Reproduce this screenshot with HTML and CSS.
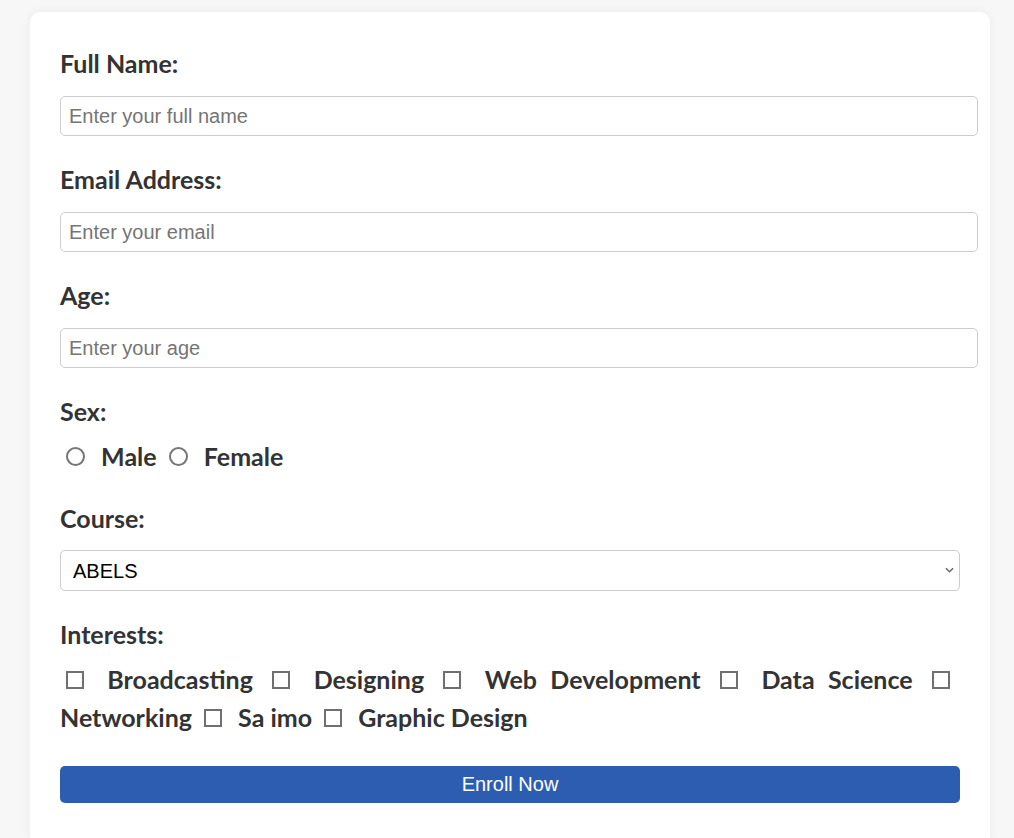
FILE: index.html
```html
<!DOCTYPE html>
<html lang="en">
<head>
<meta charset="utf-8">
<title>Enrollment Form</title>
<link rel="stylesheet" href="styles.css">
</head>
<body>
<div class="page">
  <form class="card">
    <label class="field-label" for="name">Full Name:</label>
    <input class="text-input" id="name" type="text" placeholder="Enter your full name">

    <label class="field-label" for="email">Email Address:</label>
    <input class="text-input" id="email" type="email" placeholder="Enter your email">

    <label class="field-label" for="age">Age:</label>
    <input class="text-input" id="age" type="text" placeholder="Enter your age">

    <label class="field-label group-label">Sex:</label>
    <div class="options radios">
      <input class="opt radio" type="radio" name="sex" id="male"> <label for="male">Male</label>
      <input class="opt radio" type="radio" name="sex" id="female"> <label for="female">Female</label>
    </div>

    <label class="field-label" for="course">Course:</label>
    <div class="select-wrap">
      <select class="select-input" id="course">
        <option>ABELS</option>
      </select>
      <svg class="chevron" width="10" height="6" viewBox="0 0 10 6" aria-hidden="true">
        <path d="M1 1 L5 5 L9 1" fill="none" stroke="#666" stroke-width="1.6"/>
      </svg>
    </div>

    <label class="field-label group-label">Interests:</label>
    <div class="options checks">
      <input class="opt check" type="checkbox" id="i1"> <label for="i1">Broadcasting</label>
      <input class="opt check" type="checkbox" id="i2"> <label for="i2">Designing</label>
      <input class="opt check" type="checkbox" id="i3"> <label for="i3">Web Development</label>
      <input class="opt check" type="checkbox" id="i4"> <label for="i4">Data Science</label>
      <input class="opt check" type="checkbox" id="i5"> <label for="i5">Networking</label>
      <input class="opt check" type="checkbox" id="i6"> <label for="i6">Sa imo</label>
      <input class="opt check" type="checkbox" id="i7"> <label for="i7">Graphic Design</label>
    </div>

    <button class="submit" type="button">Enroll Now</button>
  </form>
</div>
</body>
</html>
```

FILE: styles.css
```css
html, body {
  margin: 0;
  padding: 0;
  background: #f7f7f7;
}

.page {
  padding: 12px 0 0 30px;
}

.card {
  box-sizing: border-box;
  width: 960px;
  height: 826px;
  padding: 30px 30px 0 30px;
  background: #ffffff;
  border-radius: 10px 10px 0 0;
  box-shadow: 0 0 10px rgba(0, 0, 0, 0.06);
  font-family: "Lato", "Noto Sans", sans-serif;
  color: #333333;
}

.field-label {
  display: block;
  font-size: 25px;
  font-weight: 700;
  line-height: 30px;
  margin: 6px 0 18px;
}

.group-label {
  margin-bottom: 11px;
}

.text-input {
  display: block;
  width: 100%;
  box-sizing: content-box;
  height: 22px;
  padding: 8px;
  border: 1px solid #cccccc;
  border-radius: 5px;
  font-family: "Liberation Sans", Arial, sans-serif;
  font-size: 20px;
  color: #333;
  margin: 0 0 28px;
  outline: none;
}

.text-input::placeholder {
  color: #757575;
}

.select-wrap {
  position: relative;
  margin: -1px 0 28px;
}

.select-input {
  display: block;
  width: 100%;
  height: 41px;
  box-sizing: border-box;
  padding: 0 12px;
  border: 1px solid #cccccc;
  border-radius: 5px;
  background: #ffffff;
  -webkit-appearance: none;
  appearance: none;
  font-family: "Liberation Sans", Arial, sans-serif;
  font-size: 20px;
  color: #000;
}

.chevron {
  position: absolute;
  right: 6px;
  top: 17px;
  width: 9px;
  height: 6px;
  pointer-events: none;
}

.options {
  font-size: 25px;
  font-weight: 700;
  line-height: 38px;
  margin-bottom: 28px;
}

.checks {
  text-align: justify;
  margin-bottom: 30px;
}

.opt {
  -webkit-appearance: none;
  appearance: none;
  box-sizing: border-box;
  width: 18px;
  height: 18px;
  margin: 0 10px 0 6px;
  vertical-align: 0;
  border: 2px solid #707070;
  background: #fff;
}

.radio {
  width: 19px;
  height: 19px;
  border-radius: 50%;
  border-color: #767676;
}

.check {
  border-radius: 0;
}

.submit {
  display: block;
  width: 100%;
  height: 37px;
  border: none;
  border-radius: 5px;
  background: #2d5db0;
  color: #ffffff;
  font-family: "Liberation Sans", Arial, sans-serif;
  font-size: 20px;
}
```
